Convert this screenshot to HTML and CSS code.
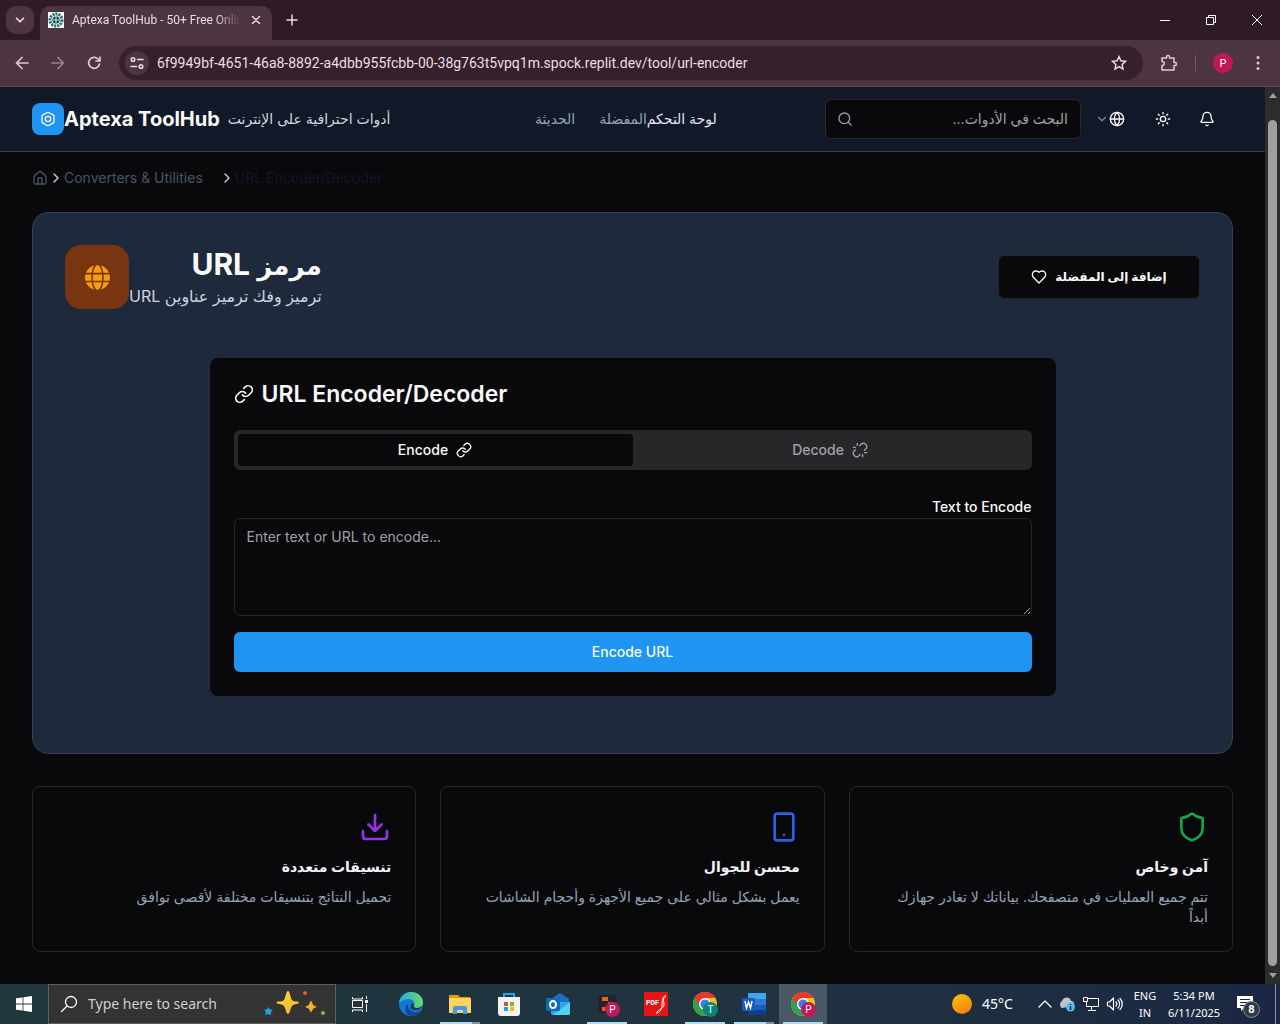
FILE: index.html
```html
<!DOCTYPE html>
<html lang="ar">
<head>
<meta charset="utf-8">
<meta name="viewport" content="width=device-width, initial-scale=1">
<title>Aptexa ToolHub - 50+ Free Online Tools</title>
<link rel="stylesheet" href="styles.css">
</head>
<body>
<svg class="defs" aria-hidden="true">
  <defs>
    <symbol id="i-link" viewBox="0 0 24 24"><path d="M10 13a5 5 0 0 0 7.54.54l3-3a5 5 0 0 0-7.07-7.07l-1.72 1.71"/><path d="M14 11a5 5 0 0 0-7.54-.54l-3 3a5 5 0 0 0 7.07 7.07l1.71-1.71"/></symbol>
    <symbol id="i-unlink" viewBox="0 0 24 24"><path d="m18.84 12.25 1.72-1.71a5.004 5.004 0 0 0-.12-7.07 5.006 5.006 0 0 0-6.95 0l-1.72 1.71"/><path d="m5.17 11.75-1.71 1.71a5.004 5.004 0 0 0 .12 7.07 5.006 5.006 0 0 0 6.95 0l1.71-1.71"/><path d="M8 2v3M2 8h3M16 19v3M19 16h3"/></symbol>
    <symbol id="i-right" viewBox="0 0 24 24"><path d="m9 18 6-6-6-6"/></symbol>
    <symbol id="i-down" viewBox="0 0 24 24"><path d="m6 9 6 6 6-6"/></symbol>
    <symbol id="i-chrome" viewBox="0 0 24 24"><circle cx="12" cy="12" r="12" fill="#fbc116"/><path d="M12 12 1.6 6A12 12 0 0 1 22.4 6H12z" fill="#e33b2e"/><path d="M1.6 6A12 12 0 0 0 12 24l5.2-9-5.2-3z" fill="#2da44e"/><path d="M1.6 6A12 12 0 0 1 22.4 6H12L7 15z" fill="#e33b2e"/><circle cx="12" cy="12" r="6" fill="#fff"/><circle cx="12" cy="12" r="4.6" fill="#3b7de9"/></symbol>
  </defs>
</svg>

<div class="tabstrip">
  <button class="tab-search" aria-label="Search tabs"><svg class="ico i14 bold" ><use href="#i-down"/></svg></button>
  <div class="tab">
    <svg class="i16" viewBox="0 0 16 16"><path fill="#f4fbfa" d="M0 0h16v16H0z"/><circle cx="8" cy="8" r="6" fill="#dff0ee" stroke="#2d6f70" stroke-width="3" stroke-dasharray="2 1"/><circle cx="8" cy="8" r="3.5" fill="#173c46"/><path d="M5 8h6M8 5v6" stroke="#d6f2ef"/></svg>
    <span class="tab-title">Aptexa ToolHub - 50+ Free Online Tools</span>
    <button class="bare" aria-label="Close tab"><svg class="ico i14 bold"  viewBox="0 0 14 14"><path d="m3.500 3.500 7 7m0-7-7 7" stroke-width="1.500"/></svg></button>
  </div>
  <button class="bare newtab" aria-label="New tab"><svg class="ico i14" viewBox="0 0 14 14"><path d="M2 7h10M7 2v10" stroke-width="1.500"/></svg></button>
  <div class="winctl">
    <button class="bare" aria-label="Minimize"><svg class="ico i14 sharp" viewBox="0 0 14 14"><path d="M2 7.500h10"/></svg></button>
    <button class="bare" aria-label="Restore"><svg class="ico i14 sharp" viewBox="0 0 14 14"><path d="M2.500 4.500h7v7h-7zM4.500 4.500v-2h7v7h-2"/></svg></button>
    <button class="bare" aria-label="Close"><svg class="ico i14 sharp" viewBox="0 0 14 14"><path d="m2 2 10 10M12 2 2 12"/></svg></button>
  </div>
</div>

<div class="toolbar">
  <div class="history">
    <button class="bare" aria-label="Back"><svg class="ico i16" viewBox="0 0 16 16"><path d="M14 8H2.500M8 2.500 2.500 8 8 13.500" stroke-width="1.700"/></svg></button>
    <button class="bare dim" aria-label="Forward"><svg class="ico i16" viewBox="0 0 16 16"><path d="M2 8h11.500M8 2.500 13.500 8 8 13.500" stroke-width="1.700"/></svg></button>
    <button class="bare" aria-label="Reload"><svg class="ico i16" viewBox="0 0 16 16"><path d="M13.500 9a5.500 5.500 0 1 1-1.400-5L14 6M14 2v4h-4" stroke-width="1.700"/></svg></button>
  </div>
  <div class="omnibox">
    <span class="site-info"><svg class="ico i16" viewBox="0 0 16 16"><g stroke-width="1.500"><circle cx="4" cy="4.500" r="1.800"/><path d="M8.500 4.500H14M2 11.500h5.500"/><circle cx="12" cy="11.500" r="1.800"/></g></svg></span>
    <input class="url" aria-label="Address" value="6f9949bf-4651-46a8-8892-a4dbb955fcbb-00-38g763t5vpq1m.spock.replit.dev/tool/url-encoder">
    <button class="bare" aria-label="Bookmark"><svg class="ico i16" viewBox="0 0 16 16"><path d="m8 1.500 1.900 4.300 4.600.5-3.400 3.100.9 4.600L8 11.600 4 14l.9-4.600L1.500 6.300l4.600-.5z" stroke-width="1.400" stroke-linejoin="miter"/></svg></button>
  </div>
  <button class="bare" aria-label="Extensions"><svg class="ico i18" viewBox="0 0 18 18"><path d="M2 4h4.500V3a1.500 1.500 0 0 1 3 0v1h4.500v4.500h1a1.500 1.500 0 0 1 0 3h-1V16H2v-4.500c3 0 3-4 0-4z" stroke-width="1.500"/></svg></button>
  <span class="divider"></span>
  <span class="avatar">P</span>
  <button class="bare" aria-label="Menu"><svg class="i16" viewBox="0 0 16 16" fill="#e2c9d5"><circle cx="8" cy="2.500" r="1.500"/><circle cx="8" cy="8" r="1.500"/><circle cx="8" cy="13.500" r="1.500"/></svg></button>
</div>

<div class="viewport">
<div class="page">
  <header class="site-header">
    <div class="brand">
      <span class="logo"><svg class="ico i16" viewBox="0 0 24 24"><path d="M21 16V8a2 2 0 0 0-1-1.730l-7-4a2 2 0 0 0-2 0l-7 4A2 2 0 0 0 3 8v8a2 2 0 0 0 1 1.730l7 4a2 2 0 0 0 2 0l7-4A2 2 0 0 0 21 16z"/><circle cx="12" cy="12" r="4"/></svg></span>
      <span class="brand-name">Aptexa ToolHub</span>
      <span class="tagline" dir="rtl">أدوات احترافية على الإنترنت</span>
    </div>
    <nav class="nav" dir="rtl">
      <a class="current" href="#">لوحة التحكم</a><a href="#">المفضلة</a><a class="spaced" href="#">الحديثة</a>
    </nav>
    <div class="actions">
      <label class="search">
        <svg class="ico i16" viewBox="0 0 24 24"><circle cx="11" cy="11" r="8"/><path d="m21 21-4.300-4.300"/></svg>
        <input type="text" dir="rtl" aria-label="البحث" placeholder="البحث في الأدوات...">
      </label>
      <button class="bare lang" aria-label="اللغة"><svg class="ico i14 faded"><use href="#i-down"/></svg><svg class="ico i16" viewBox="0 0 24 24"><circle cx="12" cy="12" r="10"/><path d="M12 2a14.500 14.500 0 0 0 0 20 14.500 14.500 0 0 0 0-20M2 12h20"/></svg></button>
      <button class="bare" aria-label="المظهر"><svg class="ico i16" viewBox="0 0 24 24"><circle cx="12" cy="12" r="4"/><path d="M12 2v2M12 20v2M4.930 4.930l1.410 1.410M17.660 17.660l1.410 1.410M2 12h2M20 12h2M6.340 17.660l-1.410 1.410M19.070 4.930l-1.410 1.410"/></svg></button>
      <button class="bare" aria-label="الإشعارات"><svg class="ico i16" viewBox="0 0 24 24"><path d="M10.268 21a2 2 0 0 0 3.464 0"/><path d="M3.262 15.326A1 1 0 0 0 4 17h16a1 1 0 0 0 .74-1.673C19.410 13.956 18 12.499 18 8A6 6 0 0 0 6 8c0 4.499-1.411 5.956-2.738 7.326"/></svg></button>
    </div>
  </header>

  <main class="content">
    <nav class="crumbs" aria-label="Breadcrumb">
      <a href="#" aria-label="Home"><svg class="ico i16" viewBox="0 0 24 24"><path d="M15 21v-8a1 1 0 0 0-1-1h-4a1 1 0 0 0-1 1v8"/><path d="M3 10a2 2 0 0 1 .709-1.528l7-5.999a2 2 0 0 1 2.582 0l7 5.999A2 2 0 0 1 21 10v9a2 2 0 0 1-2 2H5a2 2 0 0 1-2-2z"/></svg></a>
      <svg class="ico i16 sep"><use href="#i-right"/></svg>
      <a class="category" href="#">Converters &amp; Utilities</a>
      <svg class="ico i16 sep"><use href="#i-right"/></svg>
      <span class="here">URL Encoder/Decoder</span>
    </nav>

    <section class="hero">
      <div class="hero-head">
        <span class="hero-icon"><svg class="i25" viewBox="0 0 512 512" fill="#f59e0b"><path d="M352 256c0 22.200-1.200 43.600-3.300 64H163.300c-2.200-20.400-3.300-41.800-3.300-64s1.200-43.600 3.300-64h185.400c2.200 20.400 3.300 41.800 3.300 64zm28.800-64h123.100c5.300 20.500 8.100 41.900 8.100 64s-2.800 43.500-8.100 64H380.800c2.100-20.600 3.200-42 3.200-64s-1.100-43.400-3.200-64zm112.600-32H376.700c-10-63.900-29.800-117.400-55.300-151.600 78.300 20.700 142 77.500 172 151.600zm-149.100 0H167.700c6.100-36.400 15.500-68.600 27-94.700 10.500-23.600 22.200-40.700 33.500-51.500C239.400 3.200 248.700 0 256 0s16.600 3.200 27.800 13.800c11.300 10.800 23 27.900 33.500 51.500 11.600 26 20.900 58.200 27 94.700zm-209 0H18.600c30-74.100 93.700-130.900 172-151.600-25.500 34.200-45.300 87.700-55.300 151.600zM8.100 192h123.100c-2.100 20.600-3.200 42-3.200 64s1.100 43.400 3.200 64H8.100C2.800 299.500 0 278.100 0 256s2.800-43.500 8.100-64zm186.600 254.600c-11.600-26-20.900-58.200-27-94.600h176.600c-6.100 36.400-15.500 68.600-27 94.600-10.500 23.600-22.200 40.700-33.500 51.500C272.600 508.800 263.300 512 256 512s-16.600-3.200-27.800-13.800c-11.300-10.800-23-27.900-33.500-51.600zM135.300 352c10 63.900 29.800 117.400 55.300 151.600-78.300-20.700-142-77.500-172-151.600h116.700zm358.100 0c-30 74.100-93.700 130.900-172 151.600 25.500-34.200 45.300-87.700 55.300-151.600h116.700z"/></svg></span>
        <div class="hero-text" dir="rtl">
          <h1><span class="arabic">مرمز</span> URL</h1>
          <p>ترميز وفك ترميز عناوين URL</p>
        </div>
        <button class="favorite"><svg class="ico i16" viewBox="0 0 24 24"><path d="M19 14c1.490-1.460 3-3.210 3-5.500A5.500 5.500 0 0 0 16.500 3c-1.760 0-3 .5-4.500 2-1.500-1.500-2.740-2-4.500-2A5.500 5.500 0 0 0 2 8.500c0 2.300 1.500 4.050 3 5.500l7 7Z"/></svg><span dir="rtl">إضافة إلى المفضلة</span></button>
      </div>

      <div class="tool-area">
        <div class="tool">
          <h2><svg class="ico i20"><use href="#i-link"/></svg>URL Encoder/Decoder</h2>
          <div class="tabs" role="tablist">
            <button class="on" role="tab" aria-selected="true">Encode<svg class="ico i16"><use href="#i-link"/></svg></button>
            <button role="tab" aria-selected="false">Decode<svg class="ico i16"><use href="#i-unlink"/></svg></button>
          </div>
          <label class="field-label" for="source">Text to Encode</label>
          <textarea id="source" placeholder="Enter text or URL to encode..."></textarea>
          <button class="primary">Encode URL</button>
        </div>
      </div>
    </section>

    <section class="features">
      <article class="feature" dir="rtl">
        <svg class="ico i32 green" viewBox="0 0 24 24"><path d="M20 13c0 5-3.500 7.500-7.660 8.950a1 1 0 0 1-.67-.01C7.500 20.500 4 18 4 13V6a1 1 0 0 1 1-1c2 0 4.500-1.200 6.240-2.720a1.170 1.170 0 0 1 1.520 0C14.510 3.810 17 5 19 5a1 1 0 0 1 1 1z"/></svg>
        <h3>آمن وخاص</h3>
        <p>تتم جميع العمليات في متصفحك. بياناتك لا تغادر جهازك أبداً</p>
      </article>
      <article class="feature" dir="rtl">
        <svg class="ico i32 blue" viewBox="0 0 24 24"><rect x="5" y="2" width="14" height="20" rx="2"/><path d="M12 18h.01"/></svg>
        <h3>محسن للجوال</h3>
        <p>يعمل بشكل مثالي على جميع الأجهزة وأحجام الشاشات</p>
      </article>
      <article class="feature" dir="rtl">
        <svg class="ico i32 purple" viewBox="0 0 24 24"><path d="M21 15v4a2 2 0 0 1-2 2H5a2 2 0 0 1-2-2v-4M7 10l5 5 5-5M12 15V3"/></svg>
        <h3>تنسيقات متعددة</h3>
        <p>تحميل النتائج بتنسيقات مختلفة لأقصى توافق</p>
      </article>
    </section>
  </main>
</div>
<div class="scrollbar" aria-hidden="true"><span class="up"></span><span class="thumb"></span><span class="down"></span></div>
</div>

<footer class="taskbar">
  <button class="task start" aria-label="Start"><svg class="i16" viewBox="0 0 16 16" fill="#fff"><path d="M0 2.300 6.600 1.400V7.600H0zM7.400 1.300 16 0v7.600H7.400zM0 8.400h6.600v6.200L0 13.700zM7.400 8.400H16V16l-8.600-1.300z"/></svg></button>
  <label class="task-search">
    <svg class="ico i18" viewBox="0 0 18 18"><circle cx="11" cy="7" r="5.500" stroke-width="1.300"/><path d="M7 11 1.500 16.500" stroke-width="1.300"/></svg>
    <input type="text" aria-label="Search" placeholder="Type here to search">
    <svg class="sparkle" viewBox="0 0 62 28"><defs><linearGradient id="gold" x1="0" y1="0" x2="1" y2="1"><stop offset="0" stop-color="#ffd94a"/><stop offset="1" stop-color="#f2a712"/></linearGradient></defs><path fill="url(#gold)" d="M24 1c2 0 2.500 8 4.500 9.500S35 11 35 12.500s-4.500 1.500-6.500 3S26 24 24 24s-2.500-7-4.500-8.500-7-1.500-7-3 5-.5 7-2S22 1 24 1zM47 11c1 0 1.500 3.500 2.500 4.200s3 .8 3 1.600-2 .8-3 1.600S48 22 47 22s-1.500-3-2.500-3.600-3-.8-3-1.600 2-.8 3-1.600S46 11 47 11z"/><path fill="#1ba1e8" d="m4 17 2 2.500 3 .5-2 2 0 3-3-1-3 1 1-3-2-2 3-.5z"/><circle cx="41" cy="3" r="2" fill="#ef5b24"/><circle cx="59" cy="23" r="2" fill="#7cbf42"/></svg>
  </label>
  <button class="task view" aria-label="Task view"><svg class="ico i18 sharp" viewBox="0 0 18 18"><path d="M1.500 2v2h10V2M1.500 5.500h10v7h-10zM1.500 17v-2h10v2M15.500 1v3M15.500 9v8"/><path d="M14 5h3v3h-3z" fill="#fff" stroke="none"/></svg></button>
  <div class="apps">
    <button class="task" aria-label="Edge"><svg class="i24" viewBox="0 0 24 24"><defs><linearGradient id="eg" x1="0" x2="1"><stop offset="0" stop-color="#28a9e8"/><stop offset="1" stop-color="#68dc5e"/></linearGradient></defs><circle cx="12" cy="12" r="12" fill="#1478d0"/><path d="M0 11C1 4 6 0 12 0c7 0 12 5 12 10 0 4-3 6-6 6-2 0-4-1-3-2 2-3-1-7-5-7-5 0-9 3-10 4z" fill="url(#eg)"/><path d="M9 12c-1 5 4 9 9 8 2 0 4-1.500 4.500-2C20 22 16 24 12 24 6 23 4 14 9 12z" fill="#0c4a98"/><path d="M15 14c-1 1 1 2 3 2 2 0 4-1 5-2-1 3-4 4.500-7 4-4 0-5-3-4-5 0-2 3-2 3 1z" fill="#1f3640"/></svg></button>
    <button class="task open multi" aria-label="File Explorer"><svg class="i24" viewBox="0 0 24 24"><path d="M1 3h9l2 2h10v5H1z" fill="#e09b10"/><path d="M1 6h22v15H1z" fill="#ffd45e"/><path d="M5 22v-6a2 2 0 0 1 2-2h10a2 2 0 0 1 2 2v6h-4v-4H9v4z" fill="#3f9ade"/></svg></button>
    <button class="task" aria-label="Store"><svg class="i24" viewBox="0 0 24 24"><path d="M7 6V2h10v4" fill="none" stroke="#22a7e6" stroke-width="2"/><path d="M1 5h22v16a3 3 0 0 1-3 3H4a3 3 0 0 1-3-3z" fill="#f3f3f3"/><path d="M7 10h4v4H7z" fill="#e94f2a"/><path d="M13 10h4v4h-4z" fill="#7dba18"/><path d="M7 15h4v4H7z" fill="#1aa1e6"/><path d="M13 15h4v4h-4z" fill="#fcb714"/></svg></button>
    <button class="task" aria-label="Outlook"><svg class="i24" viewBox="0 0 24 24"><path d="m5 7 9-6 9 6v6H5z" fill="#1b6fc4"/><path d="M5 10h19v11a2 2 0 0 1-2 2H7a2 2 0 0 1-2-2z" fill="#2ea6e8"/><path d="m24 10-17 13h15a2 2 0 0 0 2-2z" fill="#50d2f5"/><rect y="6" width="14" height="13" rx="1" fill="#0f6cbd"/><ellipse cx="7" cy="12.500" rx="3" ry="3.500" fill="none" stroke="#fff" stroke-width="2"/></svg></button>
    <button class="task open" aria-label="Replit"><svg class="i24" viewBox="0 0 24 24"><rect x="3" y="3" width="18" height="18" rx="2" fill="#1f2430"/><path d="M7 5h6v4H7zM13 10h6v4h-6zM7 15h6v4H7z" fill="#f26207"/></svg><b class="badge pink">P</b></button>
    <button class="task" aria-label="PDF"><span class="pdf">PDF<svg viewBox="0 0 24 24"><path d="M22 4c-2-1-4 3-4 8s-2 9-6 9c2-3 8-5 8-8s-2-7 2-9z"/></svg></span></button>
    <button class="task open" aria-label="Chrome T"><svg class="i24"><use href="#i-chrome"/></svg><b class="badge teal">T</b></button>
    <button class="task open multi" aria-label="Word"><svg class="i24" viewBox="0 0 24 24"><path d="M6 1h18v6H6z" fill="#41a5ee"/><path d="M6 7h18v6H6z" fill="#2b7cd3"/><path d="M6 13h18v5H6z" fill="#185abd"/><path d="M6 18h18v5H6z" fill="#103f91"/><rect y="6" width="13" height="13" rx="1" fill="#185abd"/><path d="m3 9 1.500 7 2-6 2 6L10 9" fill="none" stroke="#fff" stroke-width="1.500"/></svg></button>
    <button class="task open active" aria-label="Chrome P"><svg class="i24"><use href="#i-chrome"/></svg><b class="badge pink">P</b></button>
  </div>
  <div class="tray">
    <span class="sun"></span><span class="temp">45°C</span>
    <svg class="ico i14" viewBox="0 0 14 14"><path d="m1 10 6-6 6 6" stroke-width="1.300"/></svg>
    <svg class="i18" viewBox="0 0 18 18"><path d="M4 13a4 4 0 0 1 0-7c1-4 8-5 9 0 2 0 4 2 3 5z" fill="#bfc3c9"/><circle cx="12.500" cy="12" r="4.500" fill="#50bdf5"/><path d="M12.500 11v4M12.500 9v1" stroke="#123" stroke-width="1.500"/></svg>
    <svg class="ico i18 sharp" viewBox="0 0 18 18"><path d="M6 3.500h10.500v8H4.500V7M1.500 2.500h4v4h-4zM9.500 12v3M6 15.500h8"/></svg>
    <svg class="ico i18" viewBox="0 0 18 18"><path d="M1.500 7h2l4-4v12l-4-4h-2zM10 7a3 3 0 0 1 0 4M12 5a6 6 0 0 1 0 8M14 3.500c3 3 3 8 0 11" stroke-width="1.200"/></svg>
    <span class="two lang-code">ENG<br>IN</span>
    <span class="two clock">5:34 PM<br>6/11/2025</span>
    <span class="notes"><svg class="i18" viewBox="0 0 18 18"><path d="M1 1h16v12H8l-3 3v-3H1z" fill="#fff"/><path d="M4 4.500h10M4 7.500h10M4 10.500h6" stroke="#1b2740"/></svg><b>8</b></span>
    <span class="peek"></span>
  </div>
</footer>
</body>
</html>
```

FILE: styles.css
```css
* { box-sizing: border-box; }

body {
  margin: 0;
  min-height: 100vh;
  display: flex;
  flex-direction: column;
  background: #09090b;
  color: #fafafa;
  font: 14px/20px Inter, "DejaVu Sans", sans-serif;
}

button, input, textarea { font: inherit; color: inherit; }
button { cursor: pointer; }
a { color: inherit; text-decoration: none; }
h1, h2, h3, p { margin: 0; }
input { min-width: 0; background: none; border: 0; outline: 0; padding: 0; }

.defs { display: none; }
svg { flex: none; display: block; }
.ico { fill: none; stroke: currentColor; stroke-width: 2; stroke-linecap: round; stroke-linejoin: round; }
.sharp { stroke-width: 1; stroke-linecap: butt; stroke-linejoin: miter; }
.bold { stroke-width: 3; }
.i14 { width: 14px; height: 14px; }
.i16 { width: 16px; height: 16px; }
.i18 { width: 18px; height: 18px; }
.i20 { width: 20px; height: 20px; }
.i24 { width: 24px; height: 24px; }
.i25 { width: 25px; height: 25px; }
.i32 { width: 32px; height: 32px; }
.faded { opacity: .5; }
.bare { display: flex; align-items: center; justify-content: center; padding: 0; border: 0; background: none; }

/* Browser frame */
.tabstrip {
  display: flex;
  height: 40px;
  padding: 6px 0 0 6px;
  background: #2f1b26;
  font: 12px/16px Roboto, sans-serif;
  color: #e8dbe2;
}
.tab-search {
  display: flex; align-items: center; justify-content: center;
  width: 28px; height: 28px; padding: 0;
  border: 0; border-radius: 10px; background: #4c3541;
}
.tab {
  display: flex; align-items: center; gap: 8px;
  width: 232px; margin-left: 6px; padding: 0 9px 6px 8px;
  border-radius: 10px 10px 0 0; background: #4c3541;
}
.tab-title {
  flex: 1; overflow: hidden; white-space: nowrap;
  mask-image: linear-gradient(to right, #000 85%, transparent);
}
.newtab { width: 40px; height: 28px; }
.winctl { display: flex; margin-left: auto; color: #fff; }
.winctl button { width: 46px; height: 28px; }

.toolbar {
  display: flex; align-items: center; gap: 17px;
  height: 47px; padding: 0 14px;
  background: #4c3541; border-bottom: 1px solid #5b4651;
  color: #e2c9d5;
}
.history { display: flex; gap: 20px; }
.dim { opacity: .5; }
.omnibox {
  display: flex; align-items: center; flex: 1; gap: 8px;
  height: 34px; padding: 0 16px 0 6px;
  border-radius: 17px; background: #35202b;
  font: 14px/20px Roboto, sans-serif; color: #eadfe5;
}
.omnibox .url { flex: 1; }
.site-info {
  display: flex; align-items: center; justify-content: center;
  width: 24px; height: 24px; border-radius: 12px; background: #4c3541;
}
.divider { width: 1px; height: 16px; background: #735b68; }
.avatar {
  display: flex; align-items: center; justify-content: center;
  width: 20px; height: 20px; border-radius: 10px;
  background: #c2185b; color: #fff; font-size: 11px;
}

/* Page and its scrollbar */
.viewport { display: flex; flex: 1; }
.page { flex: 1; min-width: 0; }
.scrollbar {
  display: flex; flex-direction: column; align-items: center; justify-content: space-between;
  width: 15px; padding: 6px 0; background: #2c2c2c;
}
.thumb { flex: 1; width: 9px; margin: 22px 0 7px; border-radius: 5px; background: #9f9f9f; }
.up, .down { border: 4px solid transparent; }
.up { border-top: 0; border-bottom: 5px solid #9f9f9f; }
.down { border-bottom: 0; border-top: 5px solid #9f9f9f; }

.site-header {
  display: flex; align-items: center;
  height: 65px; padding: 0 38px 0 32px;
  background: #111827; border-bottom: 1px solid #334155;
}
.brand { display: flex; align-items: center; flex: 0 1 503px; white-space: nowrap; }
.logo {
  display: flex; align-items: center; justify-content: center;
  width: 32px; height: 32px; border-radius: 8px; background: #2094f3;
}
.brand-name { font-size: 20px; line-height: 28px; font-weight: 700; }
.tagline { margin-left: 8px; color: #d1d5db; }
.nav { display: flex; color: #94a3b8; font-weight: 500; white-space: nowrap; }
.nav .current { color: #e2e8f0; }
.nav .spaced { margin-right: 24px; }
.actions { display: flex; align-items: center; gap: 4px; margin-left: auto; }
.actions button { width: 40px; height: 40px; }
.actions .lang { width: 54px; padding-right: 4px; }
.search {
  display: flex; align-items: center; gap: 12px;
  width: 256px; height: 40px; padding: 0 12px 0 11px;
  border: 1px solid #27272a; border-radius: 6px; background: #09090b; color: #94a3b8;
}
.search input { flex: 1; }
::placeholder { color: #a1a1aa; opacity: 1; }

.content { padding: 16px 32px 32px; }
.crumbs { display: flex; align-items: center; color: #475569; margin-bottom: 24px; }
.sep { color: #cbd5e1; }
.category { margin-right: 16px; }
.here { color: #111827; }

.hero { padding: 32px; border: 1px solid #334155; border-radius: 16px; background: #1e293b; }
.hero-head { display: flex; align-items: center; margin-bottom: 24px; }
.hero-icon {
  display: flex; align-items: center; justify-content: center;
  width: 64px; height: 64px; border-radius: 16px; background: #78350f;
}
.hero h1 { font-size: 30px; line-height: 36px; font-weight: 700; }
.arabic { font-size: 26px; }
.hero-text p { font-size: 16px; line-height: 24px; color: #cbd5e1; }
.favorite {
  display: flex; align-items: center; justify-content: center; gap: 8px;
  width: 202px; height: 44px; margin-left: auto;
  border: 1px solid #27272a; border-radius: 6px; background: #09090b;
  font-size: 12px; font-weight: 600;
}
.tool-area { padding: 25px; }
.tool { max-width: 846px; margin: 0 auto; padding: 24px; border-radius: 8px; background: #09090b; }
.tool h2 {
  display: flex; align-items: center; gap: 8px;
  font-size: 23px; line-height: 24px; font-weight: 600;
}
.tabs {
  display: grid; grid-template-columns: 1fr 1fr;
  height: 40px; margin: 24px 0; padding: 4px; border-radius: 6px; background: #27272a;
}
.tabs button {
  display: flex; align-items: center; justify-content: center; gap: 8px;
  border: 0; border-radius: 4px; background: none; color: #a1a1aa; font-weight: 500;
}
.tabs .on { background: #09090b; color: #fafafa; }
.field-label { display: block; padding-top: 2px; line-height: 22px; font-weight: 500; text-align: right; }
.tool textarea {
  display: block; width: 100%; height: 98px; padding: 8px 12px;
  border: 1px solid #27272a; border-radius: 6px; background: #09090b;
}
.primary {
  width: 100%; height: 40px; margin-top: 16px;
  border: 0; border-radius: 6px; background: #2094f3; font-weight: 500;
}

.features {
  display: grid; grid-template-columns: repeat(3, 1fr); gap: 24px;
  margin-top: 32px; direction: rtl;
}
.feature { min-height: 166px; padding: 24px; border: 1px solid #27272a; border-radius: 8px; }
.feature h3 { margin: 12px 0 8px; font-size: 14px; line-height: 24px; font-weight: 600; color: #f1f5f9; }
.feature p { padding-left: 16px; color: #94a3b8; }
.green { color: #16a34a; }
.blue { color: #2563eb; }
.purple { color: #9333ea; }

/* Desktop taskbar */
.taskbar {
  display: flex; height: 40px; color: #fff;
  background: linear-gradient(90deg, #20373e, #20333f 60%, #1b2743);
  font: 14px/20px "Noto Sans", sans-serif;
}
.task {
  position: relative; display: flex; align-items: center; justify-content: center;
  width: 48px; padding: 0; border: 0; background: none; color: #fff;
}
.task-search {
  display: flex; align-items: center; gap: 10px;
  width: 288px; padding: 0 9px 0 11px; border: 1px solid #5f5f5f; background: #333;
}
.task-search input { flex: 1; }
.task-search ::placeholder { color: #d0d0d0; }
.sparkle { width: 62px; height: 28px; }
.apps { display: flex; gap: 1px; margin-left: 3px; }
.open::after {
  content: ""; position: absolute; left: 4px; right: 4px; bottom: 0; height: 2px; background: #a9dcf5;
}
.multi::after { background: linear-gradient(90deg, #a9dcf5 80%, #7896a8 80%); }
.active { background: #4b5966; }
.badge {
  position: absolute; left: 22px; top: 18px; width: 15px; height: 15px; border-radius: 8px;
  font: 10px/15px Roboto, sans-serif; text-align: center;
}
.pink { background: #c2185b; }
.teal { background: #0b8577; }
.pdf {
  position: relative; width: 24px; height: 24px; background: #e81414;
  font: 700 7px/22px Roboto, sans-serif; text-align: left; padding-left: 2px;
}
.pdf svg { position: absolute; inset: 0; fill: none; stroke: #fff; }
.tray { display: flex; align-items: center; margin-left: auto; gap: 6px; white-space: nowrap; }
.sun { width: 20px; height: 20px; border-radius: 10px; background: linear-gradient(150deg, #fdc60a, #f07808); }
.temp { width: 46px; margin: 0 4px; }
.two { font-size: 11px; line-height: 17px; text-align: center; }
.lang-code { width: 30px; }
.clock { width: 56px; }
.notes { position: relative; width: 26px; margin: 0 7px 0 8px; }
.notes b {
  position: absolute; left: 7px; top: 6px; width: 17px; height: 17px;
  border: 1px solid #888; border-radius: 9px; background: #333a45;
  font: 700 11px/15px Roboto, sans-serif; text-align: center;
}
.peek { width: 5px; height: 40px; border-left: 1px solid #8a93a5; }
```
